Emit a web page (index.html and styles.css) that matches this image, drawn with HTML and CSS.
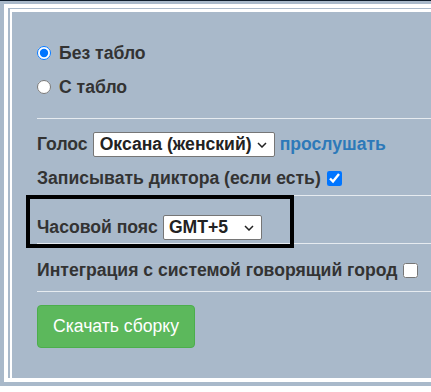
FILE: index.html
```html
<!DOCTYPE html>
<html lang="ru">
<head>
  <meta charset="UTF-8">
  <meta name="viewport" content="width=device-width, initial-scale=1.0">
  <title>Сборка</title>
  <link rel="stylesheet" href="styles.css">
</head>
<body>
<div class="topbar"></div>
<div class="page">
  <div class="frame">
    <div class="panel">
      <label class="row opt"><input type="radio" name="tablo" checked> Без табло</label>
      <label class="row opt"><input type="radio" name="tablo"> С табло</label>
      <hr class="sep first">
      <div class="row voice">
        <label for="voice">Голос</label>
        <span class="select-wrap">
          <select id="voice">
            <option>Оксана (женский)</option>
            <option>Филипп (мужской)</option>
          </select>
          <svg class="chevron" width="10" height="6" viewBox="0 0 10 6"><path d="M1 1l4 4 4-4" fill="none" stroke="#222" stroke-width="1.5"/></svg>
        </span>
        <a href="#" class="listen">прослушать</a>
      </div>
      <label class="row rec">Записывать диктора (если есть) <input type="checkbox" checked></label>
      <hr class="sep">
      <div class="row tz">
        <label for="tz">Часовой пояс</label>
        <span class="select-wrap">
          <select id="tz" class="tz-select">
            <option>GMT+5</option>
            <option>GMT+3</option>
          </select>
          <svg class="chevron" width="10" height="6" viewBox="0 0 10 6"><path d="M1 1l4 4 4-4" fill="none" stroke="#222" stroke-width="1.5"/></svg>
        </span>
      </div>
      <hr class="sep">
      <label class="row integ">Интеграция с системой говорящий город <input type="checkbox"></label>
      <hr class="sep">
      <button class="btn-download">Скачать сборку</button>
    </div>
  </div>
</div>
</body>
</html>
```

FILE: styles.css
```css
body, html {
  margin: 0;
  background: #fff;
  font-family: "Liberation Sans", Arial, sans-serif;
  overflow: hidden;
}
.topbar {
  height: 1px;
  background: #0e1c2b;
}
.page {
  background: #a9b9ca;
  padding: 3px 0 4px 4px;
}
.frame {
  border: 4px solid #fff;
  border-right: none;
  padding: 1px 0 0 2px;
}
.panel {
  background: #a9b9ca;
  border-top: 3px solid #fff;
  border-left: 2px solid #fff;
  padding: 24px 0 30px 25px;
  color: #333;
  font-size: 17.6px;
  font-weight: bold;
}
.row {
  display: flex;
  align-items: center;
  gap: 5px;
  height: 34px;
}
.row input[type="radio"] {
  width: 14px;
  height: 14px;
  margin: 0 3px 0 0;
  accent-color: #0075ff;
}
.row input[type="checkbox"] {
  width: 15px;
  height: 15px;
  margin: 0 0 0 1px;
}
.sep {
  border: 0;
  border-top: 1px solid #e6ebf0;
  margin: 0;
}
.sep.first {
  margin-top: 14px;
}
.voice {
  margin-top: 8px;
}
.select-wrap {
  position: relative;
  display: inline-flex;
}
.chevron {
  position: absolute;
  right: 8px;
  top: 10px;
  pointer-events: none;
}
select {
  appearance: none;
  font-family: "Liberation Sans", Arial, sans-serif;
  font-size: 17.6px;
  font-weight: bold;
  color: #222;
  background: #fff;
  border: 1px solid #767676;
  border-radius: 2px;
  height: 25px;
  padding: 0 2px 0 6px;
}
#voice {
  width: 182px;
}
.tz-select {
  width: 99px;
  padding-left: 5px;
}
.listen {
  color: #2d79b9;
  text-decoration: none;
}
.sep + .tz {
  margin-top: 3px;
}
.tz {
  position: relative;
  height: 44px;
  box-sizing: border-box;
  padding-top: 12px;
}
.tz::after {
  content: "";
  position: absolute;
  left: -11px;
  top: -4px;
  width: 260px;
  height: 45px;
  border: 4px solid #000;
}
.integ {
  height: 47px;
  box-sizing: border-box;
  padding-top: 5px;
}
.btn-download {
  margin-top: 13px;
  height: 43px;
  width: 158px;
  background: #5cb85c;
  border: 1px solid #4cae4c;
  border-radius: 4px;
  color: #fff;
  font-family: "Liberation Sans", Arial, sans-serif;
  font-size: 17.6px;
  display: block;
}
```
